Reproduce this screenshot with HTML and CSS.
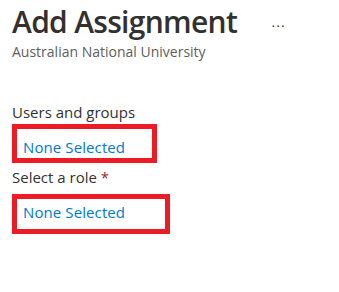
FILE: index.html
```html
<!DOCTYPE html>
<html lang="en">
<head>
  <meta charset="UTF-8">
  <title>Add Assignment</title>
  <link rel="stylesheet" href="styles.css">
</head>
<body>

<header class="blade-header">
  <div class="title-row">
    <h1>Add Assignment</h1>
    <button class="more">···</button>
  </div>
  <div class="subtitle">Australian National University</div>
</header>

<div class="form">
  <div class="field">
    <label>Users and groups</label>
    <div class="picker picker-users">
      <a href="#">None Selected</a>
    </div>
  </div>
  <div class="field">
    <label>Select a role <span class="required">*</span></label>
    <div class="picker picker-role">
      <a href="#">None Selected</a>
    </div>
  </div>
</div>

</body>
</html>
```

FILE: styles.css
```css
body { margin:0; font-family:'Open Sans','Noto Sans',sans-serif; background:#fff; color:#323130; }
.blade-header { padding:4px 12px 0; }
.title-row { display:flex; align-items:center; gap:34px; }
.title-row h1 { margin:0; font-size:30px; font-weight:600; line-height:36px; color:#323130; letter-spacing:-0.7px; }
.more { background:none; border:none; padding:0; font-size:14px; line-height:20px; color:#323130; cursor:pointer; margin-top:5px; }
.subtitle { margin-top:3px; font-size:14px; line-height:18px; color:#605e5c; }
.form { padding:41px 12px 0; }
.field label { display:block; font-size:15px; line-height:20px; color:#323130; }
.required { color:#a4262c; }
.picker { border:5px solid #ed1c24; display:block; box-sizing:border-box; }
.picker a { color:#0078d4; text-decoration:none; font-size:15px; line-height:20px; letter-spacing:0.1px; }
.picker-users { width:145px; height:39px; padding:7px 0 0 6px; margin:2px 0 4px; }
.picker-role { width:158px; height:40px; padding:2px 0 0 6px; margin-top:7px; }
```
